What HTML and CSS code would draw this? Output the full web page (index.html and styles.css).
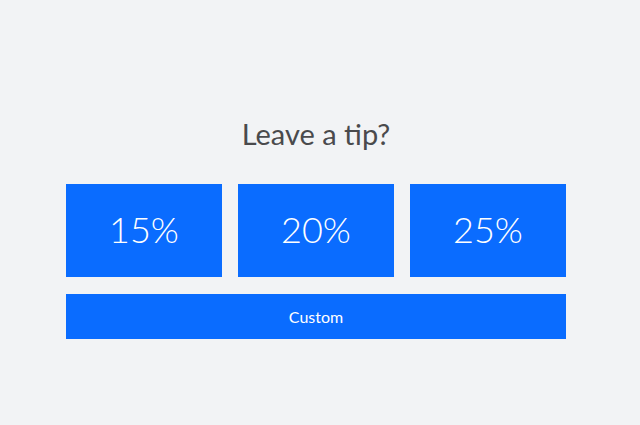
FILE: index.html
```html
<!DOCTYPE html>
<html lang="en">
<head>
    <meta charset="UTF-8">
    <meta name="viewport" content="width=device-width, initial-scale=1.0">
    <title>Leave a tip</title>
    <link rel="stylesheet" href="styles.css">
</head>
<body>
    <div class="tip-box">
        <h1 class="tip-title">Leave a tip?</h1>
        <div class="tip-options">
            <button class="tip-btn">15%</button>
            <button class="tip-btn">20%</button>
            <button class="tip-btn">25%</button>
        </div>
        <button class="custom-btn">Custom</button>
    </div>
</body>
</html>
```

FILE: styles.css
```css
body {
    margin: 0;
    padding: 0;
    background-color: #f2f3f5;
    font-family: Lato, "Open Sans", sans-serif;
}

.tip-box {
    width: 500px;
    margin-left: 66px;
    padding-top: 116px;
}

.tip-title {
    margin: 0;
    text-align: center;
    font-size: 29px;
    font-weight: normal;
    color: #4a4a4c;
    line-height: 36px;
}

.tip-options {
    display: flex;
    gap: 16px;
    margin-top: 32px;
}

.tip-btn,
.custom-btn {
    border: none;
    background-color: #0a6cff;
    color: #fff;
    font-family: inherit;
    cursor: pointer;
    padding: 0;
}

.tip-btn {
    flex: 1;
    height: 93px;
    font-size: 36px;
    font-weight: 300;
    padding-bottom: 4px;
}

.custom-btn {
    display: block;
    width: 100%;
    height: 45px;
    margin-top: 17px;
    font-size: 16px;
}
```
